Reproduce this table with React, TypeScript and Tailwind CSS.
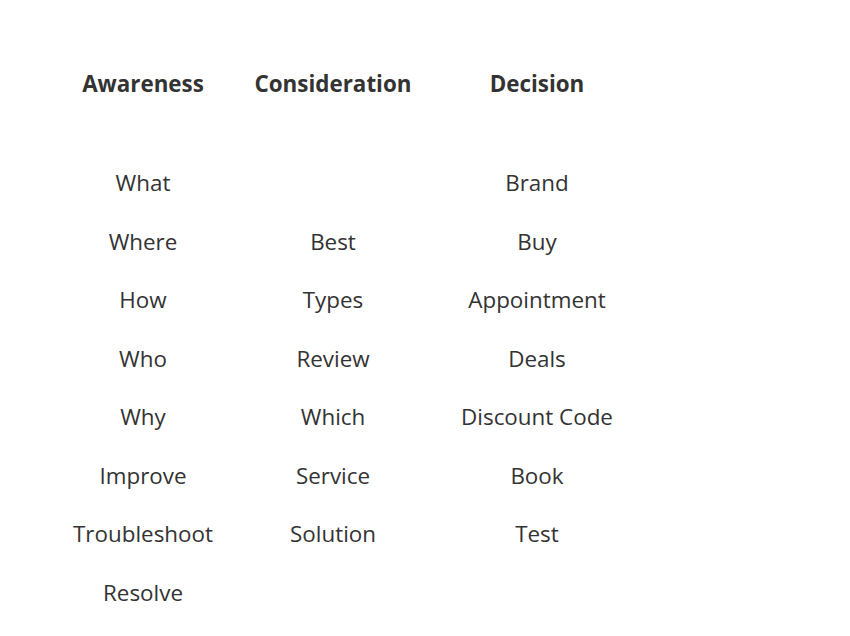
const headers = ["Awareness", "Consideration", "Decision"];

const rows: string[][] = [
  ["What", "", "Brand"],
  ["Where", "Best", "Buy"],
  ["How", "Types", "Appointment"],
  ["Who", "Review", "Deals"],
  ["Why", "Which", "Discount Code"],
  ["Improve", "Service", "Book"],
  ["Troubleshoot", "Solution", "Test"],
  ["Resolve", "", ""],
];

export default function App() {
  return (
    <div className="min-h-[636px] w-[850px] bg-white pt-[54px] pl-[43px] font-['Open_Sans',sans-serif] text-[22.4px] text-[#333333]">
      <div className="grid grid-cols-[200px_180px_228px]">
        {headers.map((h) => (
          <div key={h} className="flex h-[59px] items-center justify-center font-bold">
            {h}
          </div>
        ))}
      </div>
      <div className="mt-[41px] grid grid-cols-[200px_180px_228px]">
        {rows.map((row, i) =>
          row.map((cell, j) => (
            <div key={`${i}-${j}`} className="flex h-[58.5px] items-center justify-center">
              {cell}
            </div>
          ))
        )}
      </div>
    </div>
  );
}
